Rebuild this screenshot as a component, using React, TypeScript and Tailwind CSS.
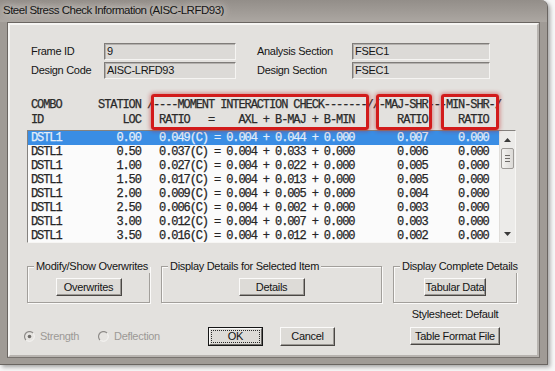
import React from "react";

const rows: string[][] = [
  ["0.00", "0.049", "0.044", "0.007"],
  ["0.50", "0.037", "0.033", "0.006"],
  ["1.00", "0.027", "0.022", "0.005"],
  ["1.50", "0.017", "0.013", "0.005"],
  ["2.00", "0.009", "0.005", "0.004"],
  ["2.50", "0.006", "0.002", "0.003"],
  ["3.00", "0.012", "0.007", "0.003"],
  ["3.50", "0.016", "0.012", "0.002"],
];

const sp = (n: number) => " ".repeat(n);

const rowLine = (r: string[]) =>
  "DSTL1" + sp(9) + r[0] + sp(3) + r[1] + "(C) = 0.004 + " + r[2] + " + 0.000" + sp(7) + r[3] + sp(5) + "0.000";

const head1 =
  "COMBO" + sp(6) + "STATION /----MOMENT INTERACTION CHECK-------//-MAJ-SHR---MIN-SHR-/";
const head2 =
  "ID" + sp(13) + "LOC" + sp(3) + "RATIO" + sp(3) + "=" + sp(4) + "AXL + B-MAJ + B-MIN" + sp(7) + "RATIO" + sp(5) + "RATIO";

function Btn({ w, mt, children }: { w: string; mt?: string; children: React.ReactNode }) {
  return (
    <div
      className={`h-[18px] ${w} ${mt ?? ""} flex items-center justify-center whitespace-nowrap border border-t-[#fbfaf9] border-l-[#fbfaf9] border-r-[#4a4744] border-b-[#4a4744] shadow-[inset_-1px_-1px_0_#9b9894] bg-[#dddbd7] text-[#141414]`}
    >
      {children}
    </div>
  );
}

function Radio({ checked }: { checked?: boolean }) {
  return (
    <svg width="11" height="11" viewBox="0 0 11 11">
      <circle cx="5.5" cy="5.5" r="4.8" fill="#e6e4e1" stroke="#f7f6f4" strokeWidth="1" />
      <path d="M9 2 A4.8 4.8 0 0 0 2 9" fill="none" stroke="#8e8b88" strokeWidth="1.2" />
      {checked && <circle cx="5.5" cy="5.5" r="1.8" fill="#6f6c69" />}
    </svg>
  );
}

function Group({ w, label, children }: { w: string; label: string; children: React.ReactNode }) {
  return (
    <div
      className={`relative ${w} h-[37px] border border-[#a29f9b] shadow-[inset_1px_1px_0_#fbfaf9,1px_1px_0_#fbfaf9] pt-[11px] flex flex-col items-center`}
    >
      <span className="absolute top-[-8px] left-[6px] px-[2px] bg-[#e3e1de] leading-[14px] text-[#151515] whitespace-nowrap">
        {label}
      </span>
      {children}
    </div>
  );
}

function TextBox({ value }: { value: string }) {
  return (
    <div className="h-[17px] border border-t-[#7f7c79] border-l-[#7f7c79] border-r-[#f5f4f2] border-b-[#f5f4f2] shadow-[inset_1px_1px_0_#b3b0ad] bg-[#dcdad7] pl-[2px] flex items-center text-[#151515] leading-none">
      {value}
    </div>
  );
}

export default function App() {
  return (
    <div className="w-[555px] h-[371px] bg-[#f7f7f7] overflow-hidden [font-family:'Liberation_Sans',Arial,sans-serif] text-[11px] tracking-[-0.3px]">
      <div className="w-[548px] h-[365px] flex flex-col bg-[#a09b96] rounded-tr-[7px] border-r border-b border-[#6a6561] shadow-[2px_2px_4px_rgba(0,0,0,0.35)]">
        <div className="h-[22px] shrink-0 flex items-center pl-[3px] rounded-tr-[7px] bg-gradient-to-b from-[#938e89] to-[#aca7a2] text-[11.5px] tracking-[-0.5px] text-[#161616] [text-shadow:0_0_6px_#dcd9d5,0_0_10px_#d0ccc8]">
          Steel Stress Check Information (AISC-LRFD93)
        </div>
        <div className="flex-1 ml-[7px] mr-[7px] mb-[6px] flex border border-t-[#6a6561] border-l-[#6a6561] border-r-[#78736f] border-b-[#78736f]">
          <div className="flex-1 flex flex-col bg-[#e3e1de] border-2 border-t-[#f6f5f3] border-l-[#f6f5f3] border-r-[#b8b4b0] border-b-[#b8b4b0] pl-[17px] pt-[18px]">
            {/* top fields */}
            <div className="ml-[4px] grid grid-cols-[73px_132px_21px_95px_138px] grid-rows-[17px_17px] gap-y-[2px] text-[#151515]">
              <div className="flex items-center">Frame ID</div>
              <TextBox value="9" />
              <div />
              <div className="flex items-center">Analysis Section</div>
              <TextBox value="FSEC1" />
              <div className="flex items-center">Design Code</div>
              <TextBox value="AISC-LRFD93" />
              <div />
              <div className="flex items-center">Design Section</div>
              <TextBox value="FSEC1" />
            </div>

            {/* header */}
            <div className="relative mt-[15px] pt-[4px] pl-[4px] w-[489px] [font-family:'Liberation_Mono',monospace] text-[12px] tracking-[-1.1px] leading-[15px] text-[#2a2a2a] whitespace-pre [-webkit-text-stroke:0.25px_currentColor]">
              <div className="h-[15px]">{head1}</div>
              <div className="h-[15px]">{head2}</div>
              <div className="absolute left-[124px] top-0 w-[218px] h-[36px] border-[3px] border-[#d21b1b] rounded-[3px] shadow-[0_0_4px_1px_rgba(190,20,20,0.45)]" />
              <div className="absolute left-[349px] top-0 w-[56px] h-[36px] border-[3px] border-[#d21b1b] rounded-[3px] shadow-[0_0_4px_1px_rgba(190,20,20,0.45)]" />
              <div className="absolute left-[414px] top-0 w-[58px] h-[36px] border-[3px] border-[#d21b1b] rounded-[3px] shadow-[0_0_4px_1px_rgba(190,20,20,0.45)]" />
            </div>

            {/* list */}
            <div className="mt-[2px] w-[489px] h-[113px] flex border border-t-[#85827f] border-l-[#85827f] border-r-[#f7f6f4] border-b-[#f7f6f4] bg-[#fbfbfb] overflow-hidden">
              <div className="flex-1 flex flex-col [font-family:'Liberation_Mono',monospace] text-[12px] tracking-[-1.1px] leading-[14px] whitespace-pre [-webkit-text-stroke:0.25px_currentColor]">
                {rows.map((r, i) => (
                  <div
                    key={i}
                    className={
                      i === 0
                        ? "h-[14px] shrink-0 pl-[3px] bg-[#3a8de4] text-[#e3edf9]"
                        : "h-[14px] shrink-0 pl-[3px] text-[#252525]"
                    }
                  >
                    {rowLine(r)}
                  </div>
                ))}
              </div>
              <div className="w-[16px] flex flex-col bg-[#ecebe9] border-l border-[#e0dedb]">
                <div className="h-[17px] flex items-center justify-center">
                  <svg width="7" height="4" viewBox="0 0 7 4">
                    <path d="M3.5 0 L7 4 L0 4 Z" fill="#3a3a3a" />
                  </svg>
                </div>
                <div className="mx-[1px] h-[21px] rounded-[2px] border border-[#9d9a97] bg-gradient-to-r from-[#f3f2f0] to-[#dcdad7] flex flex-col items-center justify-center gap-[2px]">
                  <div className="w-[5px] h-px bg-[#6e6b68]" />
                  <div className="w-[5px] h-px bg-[#6e6b68]" />
                  <div className="w-[5px] h-px bg-[#6e6b68]" />
                </div>
                <div className="flex-1" />
                <div className="h-[17px] flex items-center justify-center">
                  <svg width="7" height="4" viewBox="0 0 7 4">
                    <path d="M0 0 L7 0 L3.5 4 Z" fill="#3a3a3a" />
                  </svg>
                </div>
              </div>
            </div>

            {/* bottom section */}
            <div className="mt-[23px] flex text-[#151515]">
              <div className="w-[355px] flex flex-col">
                <div className="flex gap-[11px]">
                  <Group w="w-[123px]" label="Modify/Show Overwrites">
                    <Btn w="w-[66px]">Overwrites</Btn>
                  </Group>
                  <Group w="w-[221px]" label="Display Details for Selected Item">
                    <Btn w="w-[66px]">Details</Btn>
                  </Group>
                </div>
                <div className="mt-[24px] h-[19px] flex items-center ml-[-3px]">
                  <div className="w-[74px] flex items-center gap-[5px] text-[#9c9996]">
                    <Radio checked />
                    <span>Strength</span>
                  </div>
                  <div className="w-[110px] flex items-center gap-[5px] text-[#9c9996]">
                    <Radio />
                    <span>Deflection</span>
                  </div>
                  <div className="w-[55px] h-[19px] flex border border-[#161616] bg-[#dddbd7]">
                    <div className="flex-1 flex border border-t-[#fbfaf9] border-l-[#fbfaf9] border-r-[#6e6b68] border-b-[#6e6b68] p-[1px]">
                      <div className="flex-1 flex items-center justify-center border border-dotted border-[#2a2a2a] text-[#111]">
                        OK
                      </div>
                    </div>
                  </div>
                  <div className="ml-[17px]">
                    <Btn w="w-[55px] h-[19px]">Cancel</Btn>
                  </div>
                </div>
              </div>
              <div className="ml-[11px] w-[124px] flex flex-col items-center">
                <Group w="w-[124px]" label="Display Complete Details">
                  <Btn w="w-[62px]">Tabular Data</Btn>
                </Group>
                <div className="mt-[4px] h-[14px] leading-[14px]">Stylesheet: Default</div>
                <Btn w="w-[90px]" mt="mt-[6px]">Table Format File</Btn>
              </div>
            </div>
          </div>
        </div>
      </div>
    </div>
  );
}
